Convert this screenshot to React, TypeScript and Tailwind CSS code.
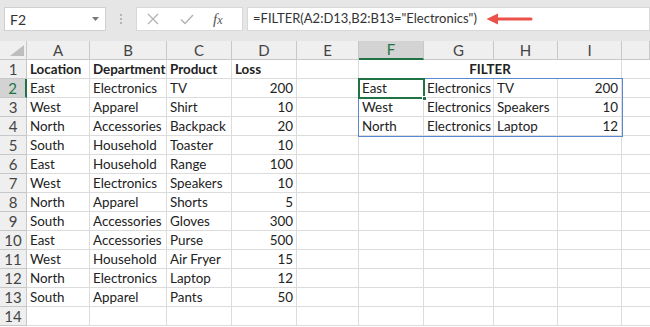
import React from "react";

const cols = ["A", "B", "C", "D", "E", "F", "G", "H", "I", ""];

type Cell = { t: string; b?: boolean; r?: boolean };

const data: (string | number)[][] = [
  ["East", "Electronics", "TV", 200],
  ["West", "Apparel", "Shirt", 10],
  ["North", "Accessories", "Backpack", 20],
  ["South", "Household", "Toaster", 10],
  ["East", "Household", "Range", 100],
  ["West", "Electronics", "Speakers", 10],
  ["North", "Apparel", "Shorts", 5],
  ["South", "Accessories", "Gloves", 300],
  ["East", "Accessories", "Purse", 500],
  ["West", "Household", "Air Fryer", 15],
  ["North", "Electronics", "Laptop", 12],
  ["South", "Apparel", "Pants", 50],
];

const filtered: (string | number)[][] = [
  ["East", "Electronics", "TV", 200],
  ["West", "Electronics", "Speakers", 10],
  ["North", "Electronics", "Laptop", 12],
];

function rowCells(r: number): Cell[] {
  const cells: Cell[] = Array.from({ length: 10 }, () => ({ t: "" }));
  if (r === 1) {
    cells[0] = { t: "Location", b: true };
    cells[1] = { t: "Department", b: true };
    cells[2] = { t: "Product", b: true };
    cells[3] = { t: "Loss", b: true };
  } else if (r <= 13) {
    const d = data[r - 2];
    cells[0] = { t: String(d[0]) };
    cells[1] = { t: String(d[1]) };
    cells[2] = { t: String(d[2]) };
    cells[3] = { t: String(d[3]), r: true };
  }
  if (r >= 2 && r <= 4) {
    const d = filtered[r - 2];
    cells[5] = { t: String(d[0]) };
    cells[6] = { t: String(d[1]) };
    cells[7] = { t: String(d[2]) };
    cells[8] = { t: String(d[3]), r: true };
  }
  return cells;
}

const font = { fontFamily: "Lato, 'Open Sans', sans-serif" };

export default function App() {
  const rows = Array.from({ length: 14 }, (_, i) => i + 1);
  return (
    <div className="w-[650px] h-[327px] overflow-hidden bg-white text-[#222]" style={font}>
      {/* Formula bar */}
      <div className="h-[41px] bg-[#e6e6e6] flex items-start pt-[7px] pl-[4px]">
        <div className="w-[102px] h-[24px] bg-white border border-[#d0d0d0] flex items-center justify-between pl-[5px] pr-[6px]">
          <span className="text-[14px] text-[#333]">F2</span>
          <svg width="7" height="4" viewBox="0 0 7 4"><path d="M0 0h7L3.5 4z" fill="#777" /></svg>
        </div>
        <div className="w-[30px] h-[24px] flex flex-col items-center justify-center gap-[2px]">
          <span className="w-[2px] h-[2px] bg-[#b5b5b5]" />
          <span className="w-[2px] h-[2px] bg-[#b5b5b5]" />
          <span className="w-[2px] h-[2px] bg-[#b5b5b5]" />
        </div>
        <div className="w-[107px] h-[24px] bg-white border border-[#d8d8d8] flex items-center">
          <svg className="ml-[9px]" width="14" height="14" viewBox="0 0 14 14"><path d="M2 2l10 10M12 2L2 12" stroke="#b3b3b3" strokeWidth="1.3" /></svg>
          <svg className="ml-[20px]" width="14" height="14" viewBox="0 0 14 14"><path d="M1 7.5l4 4L13 3" stroke="#b3b3b3" strokeWidth="1.5" fill="none" /></svg>
          <span className="ml-[19px] text-[15px] italic text-[#555]" style={{ fontFamily: "'Liberation Serif', serif" }}>
            f<span className="text-[12px]">x</span>
          </span>
        </div>
        <div className="ml-[4px] flex-1 h-[24px] bg-white border border-[#d8d8d8] flex items-center pl-[5px]">
          <span className="text-[13px] text-[#333] whitespace-nowrap">=FILTER(A2:D13,B2:B13="Electronics")</span>
          <svg className="ml-[9px]" width="48" height="14" viewBox="0 0 48 14">
            <path d="M10 7H45" stroke="#ea5148" strokeWidth="3" strokeLinecap="round" />
            <path d="M0.5 7L12 1.5V12.5Z" fill="#ea5148" />
          </svg>
        </div>
      </div>

      {/* Grid */}
      <div className="relative">
        <div className="grid grid-cols-[27px_63px_77px_65px_65px_62px_65px_70px_64px_64px_1fr] auto-rows-[19px] text-[13.4px]">
          {/* header row */}
          <div className="bg-[#efefef] border-r border-b border-[#c8c8c8] flex items-end justify-end pr-[2px] pb-[3px]">
            <svg width="14" height="11" viewBox="0 0 14 11"><path d="M14 0V11H0Z" fill="#bdbdbd" /></svg>
          </div>
          {cols.map((c, i) =>
            c === "F" ? (
              <div key={i} className="bg-[#d3d3d3] border-r border-[#c8c8c8] border-b-2 border-b-[#217346] flex items-center justify-center text-[#217346] text-[15px]">
                {c}
              </div>
            ) : (
              <div key={i} className="bg-[#efefef] border-r border-b border-[#c8c8c8] flex items-center justify-center text-[#444] text-[15px]">
                {c}
              </div>
            )
          )}
          {rows.map((r) => (
            <React.Fragment key={r}>
              {r === 2 ? (
                <div className="bg-[#d3d3d3] border-b border-[#c8c8c8] border-r-2 border-r-[#217346] flex items-center justify-center text-[#217346] text-[15px]">
                  {r}
                </div>
              ) : (
                <div className="bg-[#efefef] border-r border-b border-[#c8c8c8] flex items-center justify-center text-[#444] text-[15px]">
                  {r}
                </div>
              )}
              {r === 1 ? (
                <>
                  {rowCells(1).slice(0, 5).map((c, i) => (
                    <div key={i} className={`border-r border-b border-[#dcdcdc] flex items-center pl-[3px] pr-[2px] pt-[1px] whitespace-nowrap ${c.b ? "font-bold" : ""}`}>
                      {c.t}
                    </div>
                  ))}
                  <div className="col-span-4 border-r border-b border-[#dcdcdc] flex items-center justify-center pt-[1px] font-bold">FILTER</div>
                  <div className="border-b border-[#dcdcdc]" />
                </>
              ) : (
                <>
                  {rowCells(r).map((c, i) => (
                    <div
                      key={i}
                      className={`border-b border-[#dcdcdc] flex items-center pl-[3px] pr-[3px] pt-[1px] whitespace-nowrap ${i < 9 ? "border-r" : ""} ${c.r ? "justify-end" : ""}`}
                    >
                      {c.t}
                    </div>
                  ))}
                </>
              )}
            </React.Fragment>
          ))}
        </div>
        {/* spill range border */}
        <div className="absolute left-[358px] top-[37px] w-[265px] h-[59px] border border-[#5a87cf] pointer-events-none" />
        {/* active cell */}
        <div className="absolute left-[358px] top-[37px] w-[67px] h-[21px] border-2 border-[#217346] pointer-events-none" />
        <div className="absolute left-[422px] top-[55px] w-[5px] h-[5px] bg-[#217346] border border-white pointer-events-none" />
      </div>
    </div>
  );
}
